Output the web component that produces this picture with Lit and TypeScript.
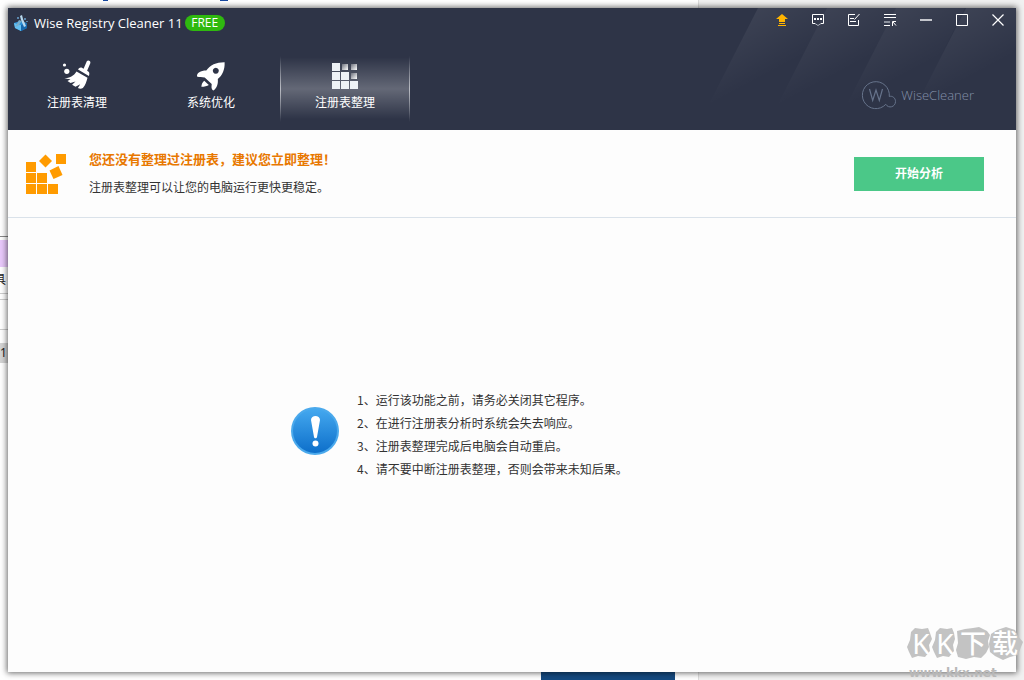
import { LitElement, html, css, svg } from "lit";
import { customElement, state } from "lit/decorators.js";

const broomIcon = svg`
  <svg class="tab-icon" viewBox="0 0 32 32" aria-hidden="true">
    <circle cx="3.5" cy="6" r="1.600" />
    <circle cx="5.800" cy="12.300" r="2.600" />
    <path d="M25.800 2.300c1.200-1.700 4.300-.2 3.500 1.900l-3.200 7.600 1.500 1c1 .8.9 2.400.3 4.300L17 10.500c.9-1.800 2.600-2.600 3.900-1.800l1.700 1z" />
    <path d="M15.500 12.500l11 6.300c-1 4-2 7.200-4.600 10.300-1.700.9-3.400.8-5-.1l2.300-3.700-4.700 2.400-3.400-2 3.400-3.200-5 1.500-3-2 3-1.700-6.200-.8c5.300-.6 9.500-2.500 12.200-7z" />
  </svg>`;

const rocketIcon = svg`
  <svg class="tab-icon" viewBox="0 0 32 32" aria-hidden="true">
    <path fill-rule="evenodd" d="M29.600 3.200c.4 7.500-2.200 13-6.800 16.800.5 4.900-.8 8.900-4.300 11.400-1.500-.6-2-2-2-3.500l.2-3-7-6.500c-2.900-.1-5.400 0-7.700-.9C1.600 14 5.500 11.500 11.300 11.500 15 6 21.500 3.100 29.600 3.200zM20.800 8.700a3 3 0 1 0 .01 0z" />
    <path d="M9.200 21.700l4.600 4.200c-1.600 1-4.400 1.800-7.400 1.800 0-2.500 1.200-4.700 2.800-6z" />
  </svg>`;

const blocksIcon = svg`
  <svg class="tab-icon" viewBox="0 0 32 32" aria-hidden="true">
    <defs>
      <linearGradient id="fade" x1="0" y1="0" x2="1" y2="1">
        <stop offset="0" stop-color="#6d717d" />
        <stop offset="1" stop-color="#ffffff" />
      </linearGradient>
    </defs>
    <g fill="#eef2f6">
      <path d="M3 4h8v8H3zM3 13h8v8H3zM12 13h8v8h-8zM3 22h8v8H3zM12 22h8v8h-8zM21 22h8v8h-8z" />
    </g>
    <rect x="13" y="5" width="6" height="6" fill="url(#fade)" />
    <rect x="22" y="5" width="6" height="6" fill="url(#fade)" />
    <rect x="22" y="14" width="6" height="6" fill="url(#fade)" />
  </svg>`;

const tabs = [
  { label: "注册表清理", icon: broomIcon },
  { label: "系统优化", icon: rocketIcon },
  { label: "注册表整理", icon: blocksIcon },
];

const tools = [
  {
    label: "升级",
    icon: svg`<path fill="#ffb400" d="M8 2l6 5h-3v3H5V7H2zM5 11h6v1H5zM4 13h8v1H4z" />`,
  },
  {
    label: "反馈",
    icon: svg`
      <path fill="none" stroke="#fff" d="M5 11.500H2.500v-9h11v9H11" />
      <path fill="none" stroke="#aeb3bd" d="M5 11.500l3 2 3-2" />
      <path fill="#fff" d="M4 6h2v2H4zM7 6h2v2H7zM10 6h2v2h-2z" />`,
  },
  {
    label: "记录",
    icon: svg`
      <path fill="none" stroke="#fff" d="M9 2.500H2.500v11h10V8M4 6.500h4M4 9.500h6M8.500 7.500l5-5.500" />`,
  },
  {
    label: "菜单",
    icon: svg`
      <path fill="none" stroke="#fff" d="M2 2.500h12M2 5.500h12M2 13.500h6" />
      <path fill="#8d929e" d="M2 9h6v2H2z" />
      <path fill="none" stroke="#fff" d="M10.500 14v-4.500H14M11 10l3 3.500" />`,
  },
  { label: "最小化", icon: svg`<path fill="#c4c6cc" d="M2 7h12v2H2z" />` },
  {
    label: "最大化",
    icon: svg`<path fill="none" stroke="#fff" d="M2.500 2.500h11v11h-11z" />`,
  },
  {
    label: "关闭",
    icon: svg`<path fill="none" stroke="#fff" stroke-width="1.200" d="M2.500 2.500l11 11M13.500 2.500l-11 11" />`,
  },
];

const tips = [
  "1、运行该功能之前，请务必关闭其它程序。",
  "2、在进行注册表分析时系统会失去响应。",
  "3、注册表整理完成后电脑会自动重启。",
  "4、请不要中断注册表整理，否则会带来未知后果。",
];

@customElement("desktop-backdrop")
export class DesktopBackdrop extends LitElement {
  static styles = css`
    :host {
      position: absolute;
      inset: 0;
      overflow: hidden;
      background: #fff;
      color: #222;
      font: 12px/16px "Noto Sans", "Noto Sans CJK SC", sans-serif;
    }
    .side {
      position: absolute;
      inset: 0 0 0 auto;
      width: 326px;
      background: #f1f1f1;
      border-left: 1px solid #ddd;
      box-sizing: border-box;
    }
    .strip {
      position: absolute;
      left: 0;
      top: 236px;
      width: 8px;
      border-top: 1px solid #888;
    }
    .lilac {
      height: 27px;
      margin-top: 3px;
      background: #e8c8fa;
    }
    .clip {
      display: flex;
      justify-content: flex-end;
      height: 26px;
      line-height: 26px;
      padding-right: 2px;
      white-space: nowrap;
    }
    .line {
      height: 5px;
      border: solid #ccc;
      border-width: 1px 0;
    }
    .gap {
      height: 29px;
      border-bottom: 1px solid #ccc;
    }
    .number {
      margin-top: 13px;
      height: 20px;
      line-height: 20px;
      background: #d4d4d4;
    }
    .banner {
      position: absolute;
      left: 541px;
      bottom: 0;
      width: 134px;
      height: 10px;
      background: #154a80;
    }
    .mark {
      position: absolute;
      top: 0;
      height: 1px;
      width: 5px;
      background: #1546a0;
    }
    .first {
      left: 103px;
    }
    .second {
      left: 220px;
      width: 8px;
    }
  `;

  render() {
    return html`
      <div class="side"></div>
      <div class="mark first"></div>
      <div class="mark second"></div>
      <div class="strip">
        <div class="lilac"></div>
        <div class="clip">具</div>
        <div class="line"></div>
        <div class="gap"></div>
        <div class="number">1</div>
      </div>
      <div class="banner"></div>
    `;
  }
}

@customElement("site-watermark")
export class SiteWatermark extends LitElement {
  static styles = css`
    :host {
      position: absolute;
      right: 0;
      bottom: 0;
      width: 118px;
      height: 58px;
      pointer-events: none;
    }
    svg {
      display: block;
      width: 118px;
      height: 58px;
    }
    .latin {
      font: 28px "Noto Sans", sans-serif;
      fill: #fff;
    }
    .han {
      font: 500 26px "Noto Sans CJK SC", sans-serif;
      fill: #fff;
    }
    .site {
      font: bold 12px "DejaVu Sans", sans-serif;
      fill: #b8b8b8;
    }
  `;

  render() {
    return html`
      <svg viewBox="0 0 118 58" aria-hidden="true">
        <g fill="#c3c3c3">
          <path d="M5 10l4-4 7 1 6-1 2 5 2 6-3 6 1 6-5 6-7-1-6 2-3-6-2-5 3-7z" />
          <path d="M30 10l4-4 7 1 5-1 2 5 1 6-2 6 1 6-5 6-6-1-6 2-3-6-2-5 3-7z" />
          <path d="M51 9l8-2 8-1 6-1 8 4 3 4-2 6 1 6-3 6-5 5-7-1-8 2-8-2-2-7 2-7z" />
          <path d="M85 12l6-4 9-3 9 3 3 6 5 6-2 5-3 8-8 2-7 3-8-4-5-4-1-8z" />
        </g>
        <g text-anchor="middle">
          <text class="latin" x="15" y="32">K</text>
          <text class="latin" x="39" y="32">K</text>
          <text class="han" x="67" y="31">下</text>
          <text class="han" x="99" y="31">载</text>
        </g>
        <text class="site" x="3" y="55">www.kkx.net</text>
      </svg>
    `;
  }
}

@customElement("app-root")
export class AppRoot extends LitElement {
  @state() private active = 2;

  static styles = css`
    :host {
      display: flex;
      position: relative;
      box-sizing: border-box;
      min-height: 100vh;
      padding: 8px;
      overflow: hidden;
      font: 12px/16px "Noto Sans", "Noto Sans CJK SC", sans-serif;
      color: #333;
    }
    button {
      margin: 0;
      padding: 0;
      border: 0;
      background: none;
      font: inherit;
      color: inherit;
      cursor: pointer;
    }
    .window {
      position: relative;
      flex: 1;
      display: flex;
      flex-direction: column;
      background: #fdfdfd;
      box-shadow: 0 0 6px 1px rgba(0, 0, 0, 0.6);
    }
    .header {
      display: grid;
      grid-template-columns: 1fr auto;
      grid-template-rows: 42px 80px;
      background: #2e3447;
      color: #fff;
      position: relative;
    }
    .rays {
      position: absolute;
      right: 0;
      top: 0;
      width: 320px;
      height: 122px;
    }
    .title {
      position: relative;
      display: flex;
      align-items: center;
      height: 30px;
      margin: 0;
      padding-left: 5px;
      font-family: "Open Sans", "Noto Sans", sans-serif;
      font-size: 13px;
      font-weight: 400;
    }
    .logo {
      width: 16px;
      height: 16px;
      margin-right: 5px;
    }
    .badge {
      height: 16px;
      width: 40px;
      margin-left: 2px;
      border-radius: 8px;
      background: #2fb90f;
      text-align: center;
      font-size: 12px;
    }
    .tools {
      position: relative;
      display: flex;
      gap: 20px;
      height: 24px;
      padding-right: 10px;
    }
    .tool svg {
      display: block;
      width: 16px;
      height: 16px;
    }
    .tabs {
      display: flex;
      gap: 4px;
      padding-left: 4px;
    }
    .tab {
      display: flex;
      flex-direction: column;
      align-items: center;
      gap: 3px;
      width: 130px;
      height: 72px;
      padding-top: 9px;
      position: relative;
      font-family: "Noto Sans CJK SC", sans-serif;
    }
    .tab.active {
      background: linear-gradient(
        rgba(255, 255, 255, 0) 10%,
        rgba(255, 255, 255, 0.26) 54%,
        rgba(255, 255, 255, 0) 96%
      );
    }
    .tab.active::before,
    .tab.active::after {
      content: "";
      position: absolute;
      top: 6px;
      bottom: 0;
      left: 0;
      width: 1px;
      background: linear-gradient(transparent, #b9bcc3 50%, transparent);
    }
    .tab.active::after {
      left: auto;
      right: 0;
    }
    .tab-icon {
      width: 32px;
      height: 32px;
      fill: #fff;
    }
    .brand {
      position: relative;
      display: flex;
      align-items: center;
      gap: 4px;
      height: 90px;
      margin-right: 42px;
      justify-self: end;
      color: #8390a8;
      font: 300 13px/20px "Open Sans", "Noto Sans", sans-serif;
    }
    .brand svg {
      width: 36px;
      height: 30px;
    }
    .notice {
      display: flex;
      align-items: center;
      height: 87px;
      padding: 0 32px 0 17px;
      border-bottom: 1px solid #dae2ea;
    }
    .notice-icon {
      width: 42px;
      height: 42px;
      fill: #ff9b00;
    }
    .message {
      flex: 1;
      padding: 0 0 2px 22px;
      font-family: "Noto Sans CJK SC", sans-serif;
    }
    .message h2 {
      margin: 0 0 8px;
      font-size: 13px;
      line-height: 20px;
      font-weight: 700;
      color: #e87800;
    }
    .message p {
      margin: 0;
      line-height: 20px;
    }
    .start {
      width: 130px;
      height: 34px;
      padding-bottom: 2px;
      background: #4bc888;
      color: #fff;
      font-family: "Noto Sans CJK SC", sans-serif;
      font-weight: 700;
    }
    .body {
      flex: 1;
      display: flex;
      align-items: flex-start;
      gap: 18px;
      padding: 170px 24px 0 283px;
    }
    .alert {
      width: 48px;
      height: 48px;
      margin-top: 19px;
    }
    .tips {
      margin: 0;
      padding: 0;
      list-style: none;
      font-family: "Noto Sans CJK SC", sans-serif;
      line-height: 23px;
    }
  `;

  render() {
    return html`
      <desktop-backdrop></desktop-backdrop>
      <main class="window">
        <header class="header">
          <svg class="rays" viewBox="0 0 320 122" aria-hidden="true">
            <defs>
              <linearGradient id="ray" gradientUnits="userSpaceOnUse" x1="0" y1="0" x2="30" y2="56">
                <stop offset="0" stop-color="#fff" stop-opacity="0.07" />
                <stop offset="1" stop-color="#fff" stop-opacity="0" />
              </linearGradient>
            </defs>
            ${[62, 131, 200, 270].map(
              (x) => svg`<path transform="translate(${x} 0)" fill="url(#ray)" d="M0 0h69L19 98h-69z" />`
            )}
          </svg>
          <h1 class="title">
            <svg class="logo" viewBox="0 0 16 16" aria-hidden="true">
              <path fill="#2b8fd6" d="M1 8l6-2 7 2v5l-6 3-6-3z" />
              <path fill="#64c0f2" d="M1 8l7 2v6l-6-3z" />
              <path fill="#1768ad" d="M8 10l6-2v5l-6 3z" />
              <path fill="#b8d9ee" d="M7 1l2-1 1 4 3 7-2 1-3-7z" />
              <path fill="#79aecb" d="M6 5l3 1-4 5-3 1z" />
              <path fill="#5a86ad" d="M11 3h2v2h-2zM13 6h2v1h-2zM4 2h2v2H4z" />
            </svg>
            <span>Wise Registry Cleaner 11</span>
            <span class="badge">FREE</span>
          </h1>
          <div class="tools">
            ${tools.map(
              (t) => html`<button class="tool" aria-label=${t.label}>
                <svg viewBox="0 0 16 16" aria-hidden="true">${t.icon}</svg>
              </button>`
            )}
          </div>
          <nav class="tabs">
            ${tabs.map(
              (t, i) => html`<button
                class="tab ${i === this.active ? "active" : ""}"
                @click=${() => (this.active = i)}
              >
                ${t.icon}<span>${t.label}</span>
              </button>`
            )}
          </nav>
          <div class="brand">
            <svg viewBox="0 0 36 30" fill="none" stroke="#66738b" aria-hidden="true">
              <path d="M28.300 16.500A13.500 13.500 0 1 0 24.800 24.300C27.500 29 34.500 27 34.500 21.500 34.500 18 31.500 15.500 28.300 16.500" />
              <path stroke-width="1.200" d="M8.500 9l3.200 11.500L15 10l3.300 10.500L21.500 9" />
            </svg>
            <span>WiseCleaner</span>
          </div>
        </header>
        <section class="notice">
          <svg class="notice-icon" viewBox="0 0 42 42" aria-hidden="true">
            <path d="M1 9h10v10H1zM1 20h10v10H1zM12 20h10v10H12zM1 31h10v10H1zM12 31h10v10H12zM23 31h10v10H23zM31 1h10v10H31z" />
            <path d="M20.500 1.500l6.500 6.500-6.500 6.500L14 8z" />
            <path d="M24.500 17.500l9-4.500 4 9-9 4z" />
          </svg>
          <div class="message">
            <h2>您还没有整理过注册表，建议您立即整理！</h2>
            <p>注册表整理可以让您的电脑运行更快更稳定。</p>
          </div>
          <button class="start">开始分析</button>
        </section>
        <section class="body">
          <svg class="alert" viewBox="0 0 48 48" aria-hidden="true">
            <defs>
              <linearGradient id="disc" x1="0" y1="0" x2="0" y2="1">
                <stop offset="0" stop-color="#44a8ef" />
                <stop offset="1" stop-color="#0d6fca" />
              </linearGradient>
            </defs>
            <circle cx="24" cy="24" r="24" fill="#4aa9ec" />
            <circle cx="24" cy="24" r="22" fill="url(#disc)" />
            <path fill="#fff" d="M20 13c0-5.500 9-5.500 9 0l-3 17c-.3 1.800-2.700 1.800-3 0z" />
            <circle cx="24.500" cy="36.500" r="3" fill="#fff" />
          </svg>
          <ul class="tips">
            ${tips.map((t) => html`<li>${t}</li>`)}
          </ul>
        </section>
      </main>
      <site-watermark></site-watermark>
    `;
  }
}
